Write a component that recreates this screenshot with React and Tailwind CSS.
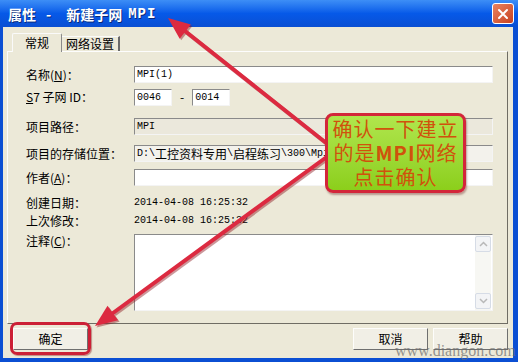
import React from "react";

const Field = ({ className = "", children }) => (
  <div
    className={`h-[17px] flex items-center px-[2px] border border-t-[#8a8a8a] border-l-[#8a8a8a] border-r-[#f4f4f4] border-b-[#f4f4f4] overflow-hidden whitespace-nowrap ${className}`}
  >
    {children}
  </div>
);

const Label = ({ children }) => (
  <div className="w-[108px] shrink-0 text-[12px] leading-[14px] text-black">{children}</div>
);

const mono = "font-['Liberation_Mono','Noto_Sans_CJK_SC',monospace] text-[10px]";

const Btn = ({ children, className = "" }) => (
  <div
    className={`w-[75px] h-[22px] flex items-center justify-center text-[12px] text-black bg-[#f1efe6] border border-t-[#fdfdfb] border-l-[#fdfdfb] border-r-[#6f6f6f] border-b-[#6f6f6f] ${className}`}
  >
    {children}
  </div>
);

const Chevron = ({ down }) => (
  <svg width="9" height="6" viewBox="0 0 9 6">
    <path
      d={down ? "M1 1 L4.5 4.5 L8 1" : "M1 5 L4.5 1.5 L8 5"}
      fill="none"
      stroke="#b8b8b8"
      strokeWidth="1.5"
    />
  </svg>
);

export default function App() {
  return (
    <div className="relative w-[518px] h-[362px] overflow-hidden bg-[#0b4fd3] flex flex-col font-['Noto_Sans_CJK_SC',sans-serif]">
      {/* title bar */}
      <div className="h-[27px] shrink-0 flex items-center justify-between pl-[8px] pr-[4px] bg-gradient-to-b from-[#3d8ef6] via-[#0659e8] to-[#0a4fd3]">
        <div className="flex items-center text-white font-bold text-[14px] leading-[16px] [text-shadow:1px_1px_0_#0a2a7a]">
          <span>属性</span>
          <span className="ml-[10px]">-</span>
          <span className="ml-[15px]">新建子网</span>
          <span className="ml-[6px] font-['Liberation_Mono',monospace] tracking-[1px]">MPI</span>
        </div>
        <div className="w-[22px] h-[21px] rounded-[3px] border border-white bg-gradient-to-br from-[#e9825f] to-[#c7401e] flex items-center justify-center">
          <svg width="12" height="12" viewBox="0 0 12 12">
            <path d="M2 2 L10 10 M10 2 L2 10" stroke="white" strokeWidth="2" strokeLinecap="round" />
          </svg>
        </div>
      </div>

      {/* body */}
      <div className="flex-1 ml-[3px] mr-[5px] mb-[4px] bg-[#ece9d8] flex flex-col">
        {/* tabs */}
        <div className="h-[24px] shrink-0 flex items-end pl-[9px]">
          <div className="relative z-10 -mb-[1px] w-[50px] h-[19px] flex items-center justify-center text-[12px] text-black bg-[#ece9d8] border border-b-0 border-t-[#fafafa] border-l-[#fafafa] border-r-[#8a8a8a] rounded-t-[2px]">
            常规
          </div>
          <div className="w-[58px] h-[15px] flex items-center justify-center text-[12px] text-black bg-[#ece9d8] border-t border-t-[#fafafa] border-r-2 border-r-[#6a6a6a]">
            网络设置
          </div>
        </div>

        {/* panel */}
        <div className="ml-[4px] mr-[5px] h-[273px] border border-t-[#fdfdfd] border-l-[#fdfdfd] border-r-[#6f6d64] border-b-[#6f6d64] pl-[18px] pr-[14px] pt-[14px]">
          <div className="flex items-center">
            <Label>
              名称(<span className="underline">N</span>)：
            </Label>
            <Field className={`flex-1 bg-white ${mono}`}>MPI(1)</Field>
          </div>
          <div className="flex items-center mt-[5px]">
            <Label>
              <span className="underline">S</span>7 子网 ID：
            </Label>
            <Field className={`w-[38px] bg-white ${mono}`}>0046</Field>
            <span className="mx-[8px] text-[12px]">-</span>
            <Field className={`w-[38px] bg-white ${mono}`}>0014</Field>
          </div>
          <div className="flex items-center mt-[12px]">
            <Label>项目路径：</Label>
            <Field className={`flex-1 bg-[#ebe8dc] ${mono}`}>MPI</Field>
          </div>
          <div className="flex items-center mt-[10px]">
            <Label>项目的存储位置：</Label>
            <Field className="flex-1 bg-[#f3f2ec] text-[12px]">
              <span className={mono}>D:\</span>工控资料专用<span className={mono}>\</span>启程练习
              <span className={mono}>\300\Mpi</span>
            </Field>
          </div>
          <div className="flex items-center mt-[7px]">
            <Label>
              作者(<span className="underline">A</span>)：
            </Label>
            <Field className="flex-1 bg-white" />
          </div>
          <div className="flex items-center h-[17px] mt-[8px]">
            <Label>创建日期：</Label>
            <span className={`${mono} text-black`}>2014-04-08 16:25:32</span>
          </div>
          <div className="flex items-center h-[17px] mt-[1px]">
            <Label>上次修改：</Label>
            <span className={`${mono} text-black`}>2014-04-08 16:25:32</span>
          </div>
          <div className="flex items-start mt-[5px]">
            <Label>
              注释(<span className="underline">C</span>)：
            </Label>
            <div className="flex-1 h-[77px] flex bg-white border border-t-[#8a8a8a] border-l-[#8a8a8a] border-r-[#f4f4f4] border-b-[#f4f4f4]">
              <div className="flex-1" />
              <div className="w-[16px] mr-[1px] flex flex-col justify-between bg-[#f7f7f3] py-[1px]">
                <div className="h-[16px] flex items-center justify-center rounded-[2px] border border-[#d6dce6] bg-[#f3f4f6]">
                  <Chevron />
                </div>
                <div className="h-[16px] flex items-center justify-center rounded-[2px] border border-[#d6dce6] bg-[#f3f4f6]">
                  <Chevron down />
                </div>
              </div>
            </div>
          </div>
        </div>

        {/* buttons */}
        <div className="flex items-center mt-[4px] pl-[10px] pr-[5px]">
          <Btn>确定</Btn>
          <div className="flex-1" />
          <Btn>取消</Btn>
          <Btn className="ml-[5px]">帮助</Btn>
        </div>
      </div>

      {/* annotation overlays */}
      <svg className="absolute inset-0 pointer-events-none" width="518" height="362" viewBox="0 0 518 362">
        <g stroke="#8e1a22" strokeWidth="4" fill="none" opacity="0.45" transform="translate(1.5 1.5)">
          <path d="M185 31 L330 146" />
          <path d="M113 313 L328 156" />
        </g>
        <g fill="#8e1a22" opacity="0.45" transform="translate(1.5 1.5)">
          <polygon points="168,18 179.7,38.7 190.9,24.5" />
          <polygon points="95,326 118.1,320.3 107.5,305.7" />
        </g>
        <g stroke="#dc2a40" strokeWidth="4" fill="none" strokeLinecap="round">
          <path d="M185 31 L330 146" />
          <path d="M113 313 L328 156" />
        </g>
        <g fill="#dc2a40">
          <polygon points="168,18 179.7,38.7 190.9,24.5" />
          <polygon points="95,326 118.1,320.3 107.5,305.7" />
        </g>
      </svg>

      <div className="absolute left-[10px] top-[322px] w-[81px] h-[33px] rounded-[7px] border-[3px] border-[#cc2036] shadow-[1px_1px_1px_rgba(120,0,0,0.4)]" />

      <div className="absolute left-[325px] top-[113px] w-[141px] h-[80px] rounded-[8px] border-[3px] border-[#d3263a] bg-gradient-to-b from-[#b0e64c] to-[#8ccf1a] flex flex-col items-center justify-center text-[#d0520c] text-[20px] leading-[24px] tracking-[1px] shadow-[1px_2px_2px_rgba(90,0,0,0.35)]">
        <span>确认一下建立</span>
        <span>
          的是<span className="font-bold">MPI</span>网络
        </span>
        <span>点击确认</span>
      </div>

      <div className="absolute left-[395px] top-[341px] font-['Liberation_Serif',serif] text-[16px] leading-[20px] text-[#6a6a6a]/70">
        www.diangon.com
      </div>
    </div>
  );
}
